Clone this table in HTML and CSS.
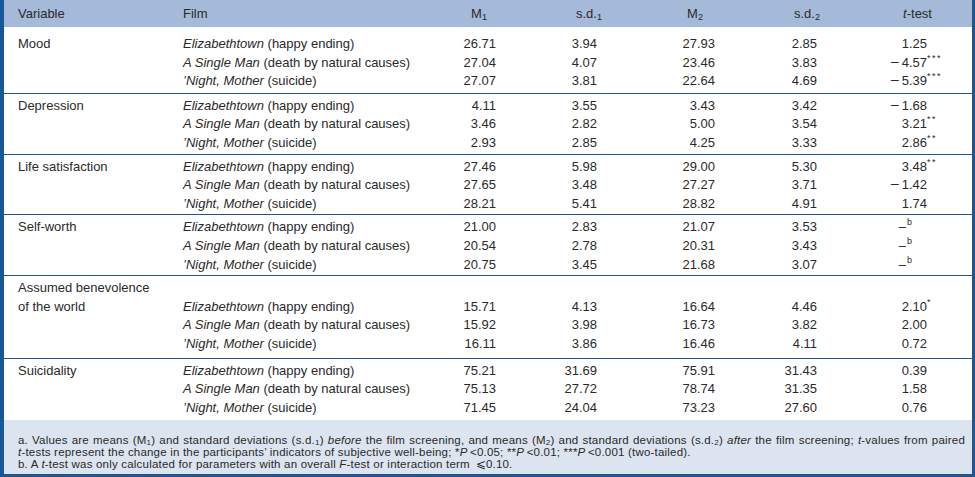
FILE: index.html
```html
<!DOCTYPE html>
<html lang="en">
<head>
<meta charset="utf-8">
<title>Table</title>
<link rel="stylesheet" href="styles.css">
</head>
<body>
<div class="frame">
  <table class="data">
    <colgroup>
      <col class="w-var"><col class="w-film"><col class="w-m1"><col class="w-sd1"><col class="w-m2"><col class="w-sd2"><col class="w-t">
    </colgroup>
    <thead>
      <tr>
        <th class="h-var">Variable</th>
        <th class="h-film">Film</th>
        <th class="h-m1">M<sub>1</sub></th>
        <th class="h-sd1">s.d.<sub>1</sub></th>
        <th class="h-m2">M<sub>2</sub></th>
        <th class="h-sd2">s.d.<sub>2</sub></th>
        <th class="h-t"><i>t</i>-test</th>
      </tr>
    </thead>
    <tbody class="grp first">
      <tr><td class="var">Mood</td><td><i>Elizabethtown</i> (happy ending)</td><td class="num">26.71</td><td class="num">3.94</td><td class="num">27.93</td><td class="num">2.85</td><td class="num t">1.25</td></tr>
      <tr><td class="var"></td><td><i>A Single Man</i> (death by natural causes)</td><td class="num">27.04</td><td class="num">4.07</td><td class="num">23.46</td><td class="num">3.83</td><td class="num t"><span class="neg">−</span>4.57<span class="sig">***</span></td></tr>
      <tr><td class="var"></td><td><i>’Night, Mother</i> (suicide)</td><td class="num">27.07</td><td class="num">3.81</td><td class="num">22.64</td><td class="num">4.69</td><td class="num t"><span class="neg">−</span>5.39<span class="sig">***</span></td></tr>
    </tbody>
    <tbody class="grp">
      <tr><td class="var">Depression</td><td><i>Elizabethtown</i> (happy ending)</td><td class="num">4.11</td><td class="num">3.55</td><td class="num">3.43</td><td class="num">3.42</td><td class="num t"><span class="neg">−</span>1.68</td></tr>
      <tr><td class="var"></td><td><i>A Single Man</i> (death by natural causes)</td><td class="num">3.46</td><td class="num">2.82</td><td class="num">5.00</td><td class="num">3.54</td><td class="num t">3.21<span class="sig">**</span></td></tr>
      <tr><td class="var"></td><td><i>’Night, Mother</i> (suicide)</td><td class="num">2.93</td><td class="num">2.85</td><td class="num">4.25</td><td class="num">3.33</td><td class="num t">2.86<span class="sig">**</span></td></tr>
    </tbody>
    <tbody class="grp">
      <tr><td class="var">Life satisfaction</td><td><i>Elizabethtown</i> (happy ending)</td><td class="num">27.46</td><td class="num">5.98</td><td class="num">29.00</td><td class="num">5.30</td><td class="num t">3.48<span class="sig">**</span></td></tr>
      <tr><td class="var"></td><td><i>A Single Man</i> (death by natural causes)</td><td class="num">27.65</td><td class="num">3.48</td><td class="num">27.27</td><td class="num">3.71</td><td class="num t"><span class="neg">−</span>1.42</td></tr>
      <tr><td class="var"></td><td><i>’Night, Mother</i> (suicide)</td><td class="num">28.21</td><td class="num">5.41</td><td class="num">28.82</td><td class="num">4.91</td><td class="num t">1.74</td></tr>
    </tbody>
    <tbody class="grp">
      <tr><td class="var">Self-worth</td><td><i>Elizabethtown</i> (happy ending)</td><td class="num">21.00</td><td class="num">2.83</td><td class="num">21.07</td><td class="num">3.53</td><td class="num t na">–<span class="sigb">b</span></td></tr>
      <tr><td class="var"></td><td><i>A Single Man</i> (death by natural causes)</td><td class="num">20.54</td><td class="num">2.78</td><td class="num">20.31</td><td class="num">3.43</td><td class="num t na">–<span class="sigb">b</span></td></tr>
      <tr><td class="var"></td><td><i>’Night, Mother</i> (suicide)</td><td class="num">20.75</td><td class="num">3.45</td><td class="num">21.68</td><td class="num">3.07</td><td class="num t na">–<span class="sigb">b</span></td></tr>
    </tbody>
    <tbody class="grp tall">
      <tr><td class="var">Assumed benevolence</td><td></td><td class="num"></td><td class="num"></td><td class="num"></td><td class="num"></td><td class="num t"></td></tr>
      <tr><td class="var">of the world</td><td><i>Elizabethtown</i> (happy ending)</td><td class="num">15.71</td><td class="num">4.13</td><td class="num">16.64</td><td class="num">4.46</td><td class="num t">2.10<span class="sig">*</span></td></tr>
      <tr><td class="var"></td><td><i>A Single Man</i> (death by natural causes)</td><td class="num">15.92</td><td class="num">3.98</td><td class="num">16.73</td><td class="num">3.82</td><td class="num t">2.00</td></tr>
      <tr><td class="var"></td><td><i>’Night, Mother</i> (suicide)</td><td class="num">16.11</td><td class="num">3.86</td><td class="num">16.46</td><td class="num">4.11</td><td class="num t">0.72</td></tr>
    </tbody>
    <tbody class="grp last">
      <tr><td class="var">Suicidality</td><td><i>Elizabethtown</i> (happy ending)</td><td class="num">75.21</td><td class="num">31.69</td><td class="num">75.91</td><td class="num">31.43</td><td class="num t">0.39</td></tr>
      <tr><td class="var"></td><td><i>A Single Man</i> (death by natural causes)</td><td class="num">75.13</td><td class="num">27.72</td><td class="num">78.74</td><td class="num">31.35</td><td class="num t">1.58</td></tr>
      <tr><td class="var"></td><td><i>’Night, Mother</i> (suicide)</td><td class="num">71.45</td><td class="num">24.04</td><td class="num">73.23</td><td class="num">27.60</td><td class="num t">0.76</td></tr>
    </tbody>
  </table>
  <div class="notes">
    <p class="justified">a. Values are means (M<sub>1</sub>) and standard deviations (s.d.<sub>1</sub>) <i>before</i> the film screening, and means (M<sub>2</sub>) and standard deviations (s.d.<sub>2</sub>) <i>after</i> the film screening; <i>t</i>-values from paired</p>
    <p><i>t</i>-tests represent the change in the participants’ indicators of subjective well-being; *<i>P</i>&thinsp;&lt;0.05; **<i>P</i>&thinsp;&lt;0.01; ***<i>P</i>&thinsp;&lt;0.001 (two-tailed).</p>
    <p>b. A <i>t</i>-test was only calculated for parameters with an overall <i>F</i>-test or interaction term &thinsp;⩽0.10.</p>
  </div>
</div>
</body>
</html>
```

FILE: styles.css
```css
html, body {
  margin: 0;
  padding: 0;
  background: #ffffff;
}

.frame {
  width: 975px;
  height: 477px;
  box-sizing: border-box;
  border-left: 4px solid #1b5794;
  border-right: 3px solid #1b5794;
  border-bottom: 3px solid #1b5794;
  display: flex;
  flex-direction: column;
  font-family: "Liberation Sans", Arial, sans-serif;
  color: #2a2a2a;
}

.data {
  width: 100%;
  border-collapse: collapse;
  table-layout: fixed;
  font-size: 13px;
}

.w-var { width: 179px; }
.w-film { width: 257px; }
.w-m1 { width: 70px; }
.w-sd1 { width: 100px; }
.w-m2 { width: 120px; }
.w-sd2 { width: 100px; }
.w-t { width: 142px; }

.data th {
  background: #a4bad8;
  height: 27px;
  padding: 0;
  font-weight: normal;
  text-align: right;
  line-height: 27px;
  white-space: nowrap;
}

.data th.h-var { text-align: left; padding-left: 14px; }
.data th.h-film { text-align: left; }
.data th.h-m1 { padding-right: 23px; }
.data th.h-sd1 { padding-right: 8px; }
.data th.h-m2 { padding-right: 27px; }
.data th.h-sd2 { padding-right: 10px; }
.data th.h-t { padding-right: 40px; }

sub {
  font-size: 0.7em;
  vertical-align: -0.25em;
  line-height: 0;
}

.data td {
  padding: 0;
  line-height: 18.6px;
  white-space: nowrap;
  vertical-align: baseline;
}

.data td.var { padding-left: 14px; }
.data td.num { text-align: right; }
.data td.num:nth-child(3) { padding-right: 14px; }
.data td.num:nth-child(4) { padding-right: 13px; }
.data td.num:nth-child(5) { padding-right: 15px; }
.data td.num:nth-child(6) { padding-right: 13px; }
.data td.t { padding-right: 45px; }
.data td.t.na { padding-right: 65px; }

.neg {
  display: inline-block;
  transform: scaleX(1.25);
  margin-right: 3px;
}

.grp + .grp { border-top: 1px solid #1b5794; }
.grp tr:first-child td { padding-top: 3px; }
.grp tr:last-child td { padding-bottom: 1px; }
.grp.first tr:first-child td { padding-top: 8px; }
.grp.first tr:last-child td { padding-bottom: 2px; }
.grp.tall tr:last-child td { padding-bottom: 4px; }
.grp.last tr:last-child td { padding-bottom: 3px; }

.sig {
  display: inline-block;
  width: 0;
  font-size: 9px;
  line-height: 0;
  vertical-align: 6px;
  text-align: left;
  letter-spacing: 1.5px;
}

.sigb {
  display: inline-block;
  width: 0;
  font-size: 9px;
  line-height: 0;
  vertical-align: 6px;
  text-align: left;
  padding-left: 1px;
}

.notes {
  flex: 1;
  background: #dce4ef;
  padding: 14px 7px 0 14px;
  font-size: 11.5px;
  line-height: 12px;
  letter-spacing: 0.2px;
  white-space: nowrap;
}

.notes sub {
  vertical-align: -0.12em;
}

.notes p {
  margin: 0;
}

.notes p.justified {
  white-space: normal;
  text-align: justify;
  text-align-last: justify;
}
```
